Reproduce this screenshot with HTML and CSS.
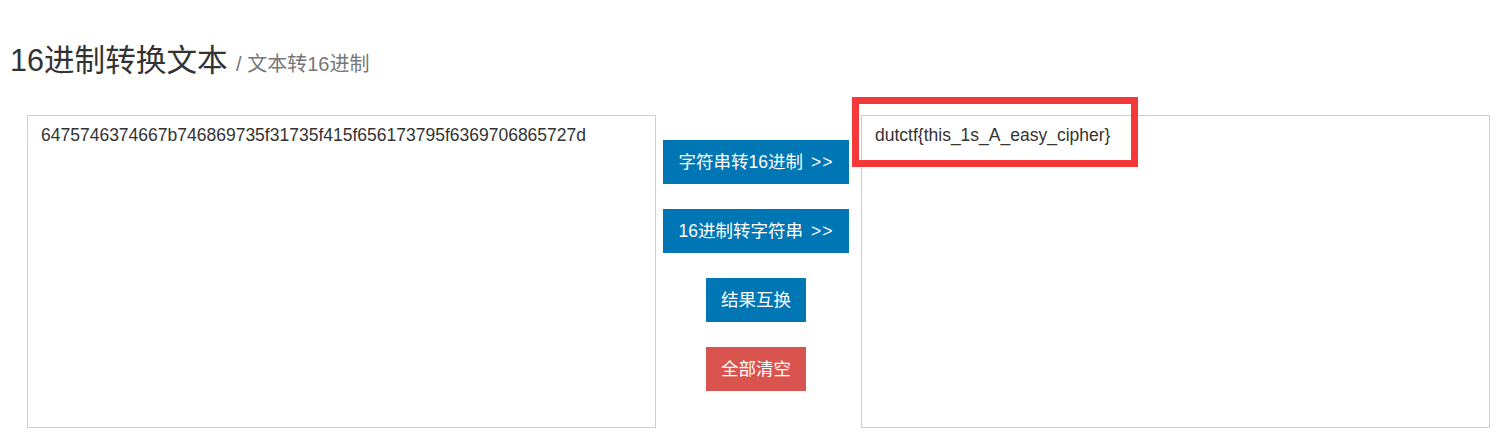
FILE: index.html
```html
<!DOCTYPE html>
<html lang="zh-CN">
<head>
<meta charset="utf-8">
<title>16进制转换文本</title>
<link rel="stylesheet" href="styles.css">
</head>
<body>
<h3 class="title">16进制转换文本 <small class="subtitle">/ 文本转16进制</small></h3>
<div class="row">
  <textarea class="box" readonly>6475746374667b746869735f31735f415f656173795f6369706865727d</textarea>
  <div class="actions">
    <button class="btn btn-blue btn-wide">字符串转16进制 <span class="arrows">&gt;&gt;</span></button>
    <button class="btn btn-blue btn-wide">16进制转字符串 <span class="arrows">&gt;&gt;</span></button>
    <button class="btn btn-blue btn-small">结果互换</button>
    <button class="btn btn-red btn-small">全部清空</button>
  </div>
  <div class="result">
    <textarea class="box" readonly>dutctf{this_1s_A_easy_cipher}</textarea>
    <div class="highlight"></div>
  </div>
</div>
</body>
</html>
```

FILE: styles.css
```css
html, body {
  margin: 0;
  padding: 0;
  background: #fff;
}

body {
  font-family: "Liberation Sans", "Noto Sans CJK SC", Arial, sans-serif;
  color: #333;
  width: 1503px;
}

.title {
  margin: 43px 0 0 10px;
  font-size: 30.6px;
  line-height: 34px;
  font-weight: normal;
  color: #333;
}

.subtitle {
  font-size: 20px;
  color: #777;
}

.row {
  display: flex;
  align-items: flex-start;
  margin-top: 34px;
  padding-left: 27px;
}

.box {
  display: block;
  box-sizing: border-box;
  width: 629px;
  height: 313px;
  margin: 0;
  padding: 7px 13px;
  border: 1px solid #c9d0da;
  border-radius: 0;
  resize: none;
  outline: none;
  background: #fff;
  color: #333;
  font-family: "Liberation Sans", "Noto Sans CJK SC", Arial, sans-serif;
  font-size: 17.5px;
  line-height: 25px;
  overflow: hidden;
}

.actions {
  box-sizing: border-box;
  width: 205px;
  padding: 25px 5px 0 0;
  display: flex;
  flex-direction: column;
  align-items: center;
  gap: 25px;
}

.btn {
  box-sizing: border-box;
  height: 44px;
  border: 0;
  border-radius: 0;
  padding: 0;
  color: #fff;
  font-family: "Liberation Sans", "Noto Sans CJK SC", Arial, sans-serif;
  font-size: 17.5px;
  line-height: 44px;
  text-align: center;
  white-space: nowrap;
  cursor: pointer;
}

.arrows {
  margin-left: 3px;
  letter-spacing: 1px;
}

.btn-wide {
  width: 186px;
}

.btn-small {
  width: 100px;
}

.btn-blue {
  background: #0076b4;
}

.btn-red {
  background: #d9534f;
}

.result {
  position: relative;
}

.highlight {
  position: absolute;
  left: -9px;
  top: -18px;
  width: 286px;
  height: 70px;
  box-sizing: border-box;
  border: 7px solid #f5393a;
  pointer-events: none;
}
```
